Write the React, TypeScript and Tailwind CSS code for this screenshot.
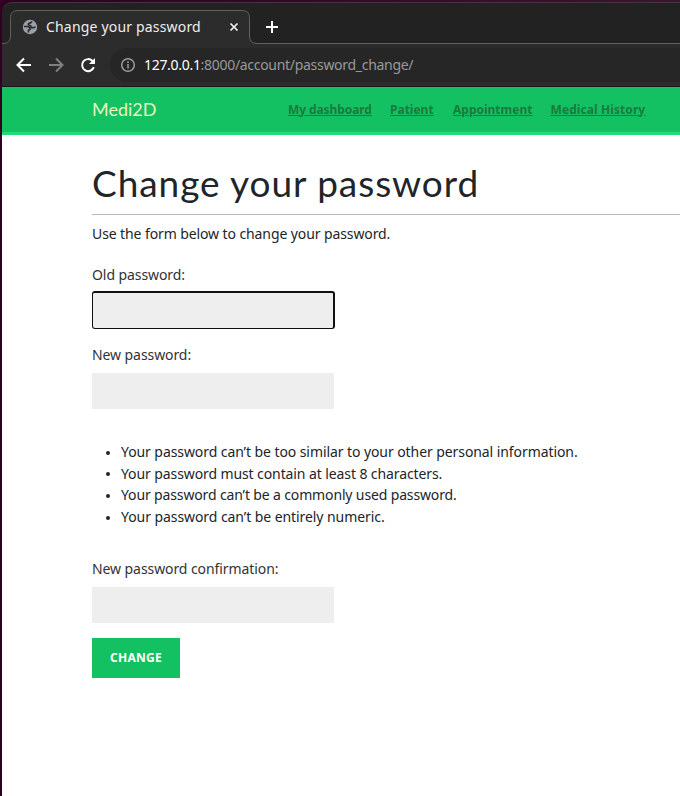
import React from "react";

const links = [
  { label: "My dashboard", cls: "w-[84px] mr-[18px] tracking-[-0.09px]" },
  { label: "Patient", cls: "w-[44px] mr-[19px]" },
  { label: "Appointment", cls: "w-[79px] mr-[18.5px]" },
  { label: "Medical History", cls: "w-[95px] tracking-[0.09px]" },
];

const rules = [
  { text: "Your password can’t be too similar to your other personal information.", cls: "tracking-[-0.08px]" },
  { text: "Your password must contain at least 8 characters.", cls: "tracking-[-0.1px]" },
  { text: "Your password can’t be a commonly used password.", cls: "tracking-[-0.14px]" },
  { text: "Your password can’t be entirely numeric.", cls: "tracking-[-0.07px]" },
];

function Browser() {
  return (
    <div className="relative h-[84px] w-full shrink-0 overflow-hidden rounded-tl-[10px] border-t border-[#3a3a3a] bg-[#222222] text-white">
      <div className="flex h-[41px] items-start">
        <svg className="absolute left-0 top-0" width="678" height="42" fill="none">
          <path d="M0 40.500H1Q8.500 40.500 8.500 33V14.500Q8.500 7.500 16 7.500H240Q247.500 7.500 247.500 14.500V33Q247.500 40.500 255 40.500H678V42H0Z" fill="#2c2c2c" />
          <path d="M0 40.500H1Q8.500 40.500 8.500 33V14.500Q8.500 7.500 16 7.500H240Q247.500 7.500 247.500 14.500V33Q247.500 40.500 255 40.500H678" stroke="#606060" />
        </svg>
        <div className="relative ml-[20px] mt-[9px] flex h-[30px] items-center">
          <svg width="16" height="16" viewBox="0 0 16 16">
            <circle cx="8" cy="8" r="7.200" fill="#9aa0a8" />
            <path d="M10 2.400Q9 4.200 7 4.300 5.400 5.500 7.300 6.300 9.200 6.500 9 8.300 10.500 9.200 13.600 8" fill="none" stroke="#2c2c2c" strokeWidth="1.700" />
            <path d="M2 7.500H5Q8 7.800 8.200 10.200L6.400 11.300V13.600" fill="none" stroke="#2c2c2c" strokeWidth="1.600" />
          </svg>
          <span className="ml-[8px] w-[155px] whitespace-nowrap text-[14px] leading-5 tracking-[0.18px] text-[#eeeeee]">Change your password</span>
          <svg className="ml-[28px]" width="10" height="10" fill="none" stroke="#f2f2f2" strokeWidth="1.700">
            <path d="M1.500 1.500l7 7m0-7l-7 7" />
          </svg>
          <svg className="ml-[26px]" width="14" height="14" fill="none" stroke="#ffffff" strokeWidth="2">
            <path d="M7 1v12M1 7h12" />
          </svg>
        </div>
      </div>
      <div className="relative flex h-[42px] items-center bg-[#2c2c2c] pl-[14px]">
        <svg width="16" height="16" fill="none" stroke="#ffffff" strokeWidth="2">
          <path d="M15 8H2M8 1.500L1.500 8 8 14.500" />
        </svg>
        <svg className="ml-[16px]" width="16" height="16" fill="none" stroke="#808080" strokeWidth="2">
          <path d="M1 8h13M8 1.500L14.500 8 8 14.500" />
        </svg>
        <svg className="ml-[16px]" width="16" height="16" fill="none" stroke="#ffffff" strokeWidth="2">
          <path d="M13.800 10.100A6 6 0 1 1 12.500 4L14 5.500" />
          <path d="M15 1v6H9z" fill="#ffffff" stroke="none" />
        </svg>
        <div className="ml-[14px] flex h-[34px] flex-1 items-center rounded-l-full bg-[#262626] pl-[10px]">
          <svg width="16" height="16" fill="none" stroke="#999da1" strokeWidth="1.500">
            <circle cx="8" cy="8" r="6.300" />
            <path d="M8 7v4.500M8 4.300v1.600" />
          </svg>
          <span className="ml-[8px] whitespace-nowrap text-[14px] leading-5 tracking-[-0.3px] text-[#999999]">
            <span className="text-white">127.0.0.1</span>:8000/account/password_change/
          </span>
        </div>
      </div>
    </div>
  );
}

export default function App() {
  return (
    <div className="flex h-[796px] w-[680px] flex-col overflow-hidden bg-gradient-to-r from-[#300020] to-[#44102e] pl-[2px] pt-[2px] font-['Noto_Sans',sans-serif]">
      <Browser />
      <div className="h-px shrink-0 bg-[#1c1517]" />
      <header className="flex h-[48px] shrink-0 items-center border-b-[3px] border-[#20de77] bg-[#13c163] pl-[90px]">
        <span className="w-[196px] pb-[2px] font-['Lato',sans-serif] text-[18px] leading-6 text-[#e3f7bf]">Medi2D</span>
        <nav className="flex text-[12px] font-bold leading-5 text-[#1a7b3c]">
          {links.map((l) => (
            <a key={l.label} className={"whitespace-nowrap underline " + l.cls}>{l.label}</a>
          ))}
        </nav>
      </header>
      <main className="flex-1 bg-white pl-[90px] text-[14px] leading-[22px] text-[#212529]">
        <h1 className="mt-[25px] h-[55px] whitespace-nowrap border-b border-[#bbbbbb] font-['Lato',sans-serif] text-[37px] leading-[46px] tracking-[0.95px]">Change your password</h1>
        <p className="mt-[8px] whitespace-nowrap tracking-[-0.1px]">Use the form below to change your password.</p>
        <label className="mt-[19px] block tracking-[-0.08px] text-[#333333]">Old password:</label>
        <div className="mt-[5px] h-[38px] w-[243px] rounded-[3px] border border-r-2 border-t-2 border-[#101010] bg-[#eeeeee]" />
        <label className="mt-[15px] block tracking-[-0.08px] text-[#333333]">New password:</label>
        <div className="mt-[7px] h-[36px] w-[242px] bg-[#eeeeee]" />
        <ul className="mt-[32px] leading-[21.6px]">
          {rules.map((r) => (
            <li key={r.text} className="flex items-center pl-[14px]">
              <span className="mr-[11px] mt-[2px] size-[4px] rounded-full bg-[#212529]" />
              <span className={"whitespace-nowrap " + r.cls}>{r.text}</span>
            </li>
          ))}
        </ul>
        <label className="mt-[30.6px] block tracking-[-0.08px] text-[#333333]">New password confirmation:</label>
        <div className="mt-[7px] h-[36px] w-[242px] bg-[#eeeeee]" />
        <button className="mt-[15px] flex h-[40px] w-[88px] items-center justify-center bg-[#13c163] text-[12px] font-bold tracking-[0.25px] text-white">CHANGE</button>
      </main>
    </div>
  );
}
